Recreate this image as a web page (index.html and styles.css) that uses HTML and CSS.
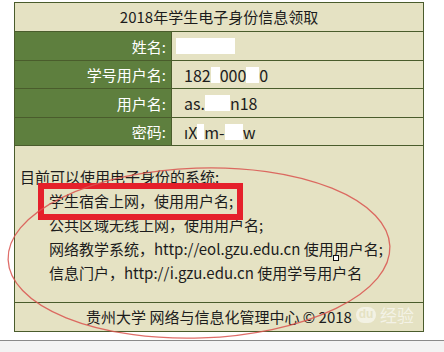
FILE: index.html
```html
<!DOCTYPE html>
<html lang="zh-CN">
<head>
<meta charset="utf-8">
<title>2018年学生电子身份信息领取</title>
<link rel="stylesheet" href="styles.css">
</head>
<body>
<div class="page">
  <div class="card">
    <div class="title">2018年学生电子身份信息领取</div>
    <div class="row">
      <div class="label">姓名:</div>
      <div class="value"><span class="mask mask-name"></span></div>
    </div>
    <div class="row short">
      <div class="label">学号用户名:</div>
      <div class="value">182<span class="mask w9"></span>000<span class="mask w13"></span>0</div>
    </div>
    <div class="row">
      <div class="label">用户名:</div>
      <div class="value">as.<span class="mask w25"></span>n18</div>
    </div>
    <div class="row short">
      <div class="label">密码:</div>
      <div class="value">ıX<span class="mask w7"></span>m-<span class="mask w18"></span>w</div>
    </div>
    <div class="info">
      <p class="lead">目前可以使用电子身份的系统:</p>
      <p class="item">学生宿舍上网，使用用户名;</p>
      <p class="item">公共区域无线上网，使用用户名;</p>
      <p class="item">网络教学系统，http://eol.gzu.edu.cn 使用用户名;</p>
      <p class="item">信息门户，http://i.gzu.edu.cn 使用学号用户名</p>
    </div>
    <div class="footer">贵州大学 网络与信息化管理中心 © 2018</div>
  </div>
  <div class="rule"></div>
  <div class="below"></div>

  <div class="highlight"></div>
  <svg class="ellipse" width="444" height="352" viewBox="0 0 444 352">
    <ellipse cx="199" cy="253" rx="191" ry="85" transform="rotate(-2 199 253)" fill="none" stroke="#d9534f" stroke-width="1.3" opacity="0.85"/>
  </svg>
  <div class="cursor"></div>
  <div class="watermark"><span class="paw">du</span><span class="wm-text">经验</span></div>
</div>
</body>
</html>
```

FILE: styles.css
```css
html, body {
  margin: 0;
  padding: 0;
  background: #ffffff;
}

body {
  font-family: "Noto Sans CJK SC", "Noto Sans", sans-serif;
}

.page {
  position: relative;
  width: 444px;
  height: 352px;
  padding-top: 2px;
  box-sizing: border-box;
  display: flex;
  flex-direction: column;
  overflow: hidden;
}

.card {
  margin-left: 14px;
  width: 410px;
  border: 1px solid #4a5c2c;
  background: #e5e2c3;
  color: #1c1c1c;
  box-sizing: border-box;
}

.title {
  height: 28px;
  line-height: 28px;
  text-align: center;
  font-size: 15px;
  border-bottom: 1px solid #4a5c2c;
}

.row {
  display: flex;
  height: 28px;
  border-bottom: 1px solid #4a5c2c;
}

.row.short {
  height: 27px;
}

.label {
  width: 157px;
  box-sizing: border-box;
  background: #5e7f3e;
  color: #ffffff;
  border-right: 1px solid #4a5c2c;
  padding-right: 5px;
  display: flex;
  align-items: center;
  justify-content: flex-end;
  font-size: 15px;
}

.value {
  flex: 1;
  display: flex;
  align-items: center;
  padding-left: 12px;
  font-size: 16px;
}

.mask {
  display: inline-block;
  height: 16px;
  background: #ffffff;
}

.mask-name {
  width: 59px;
  margin-left: -8px;
}

.w7 { width: 7px; }
.w9 { width: 9px; }
.w13 { width: 13px; }
.w18 { width: 18px; }
.w25 { width: 25px; }

.info {
  height: 157px;
  box-sizing: border-box;
  padding: 19px 0 0 5px;
  border-bottom: 1px solid #4a5c2c;
  font-size: 15px;
  line-height: 24px;
}

.info p {
  margin: 0;
}

.info .item {
  margin-left: 29px;
}

.footer {
  height: 28px;
  line-height: 28px;
  text-align: center;
  font-size: 15px;
}

.rule {
  margin-top: 8px;
  height: 1px;
  background: #8a8a8a;
}

.below {
  flex: 1;
  background: #f3f3f3;
}

.highlight {
  position: absolute;
  left: 38px;
  top: 183px;
  width: 205px;
  height: 37px;
  box-sizing: border-box;
  border: 6px solid #e5202b;
}

.ellipse {
  position: absolute;
  left: 0;
  top: 0;
  pointer-events: none;
}

.cursor {
  position: absolute;
  left: 333px;
  top: 255px;
  width: 6px;
  height: 6px;
  box-sizing: border-box;
  background: #ffffff;
  border: 1px solid #111111;
}

.watermark {
  position: absolute;
  left: 356px;
  top: 305px;
  display: flex;
  align-items: center;
  gap: 4px;
  color: rgba(255, 255, 255, 0.75);
  opacity: 0.8;
}

.paw {
  display: inline-block;
  width: 20px;
  height: 16px;
  line-height: 14px;
  border-radius: 8px;
  background: rgba(255, 255, 255, 0.7);
  color: #e5e2c3;
  font-family: "Liberation Sans", sans-serif;
  font-weight: bold;
  font-size: 12px;
  text-align: center;
}

.wm-text {
  font-size: 17px;
  line-height: 20px;
}
```
